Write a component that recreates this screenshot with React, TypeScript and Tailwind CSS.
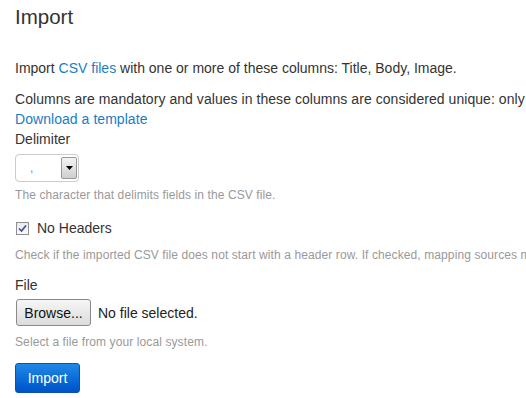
import { useState } from 'react';

function HelpText({ children, className = '' }: { children: React.ReactNode; className?: string }) {
  return <div className={`text-[12px] leading-[16px] tracking-[0.1px] text-[#999] ${className}`}>{children}</div>;
}

export default function App() {
  const [noHeaders, setNoHeaders] = useState(true);

  return (
    <div className="h-[398px] w-[526px] overflow-hidden bg-white px-[15px] font-['Liberation_Sans',Arial,sans-serif] text-[14px] leading-[20px] text-[#333] whitespace-nowrap">
      <h1 className="mt-[5px] text-[20.5px] leading-[24px] text-[#333]">Import</h1>

      <p className="mt-[29px]">
        Import <a href="#" className="text-[#1a7dc4]">CSV files</a> with one or more of these columns: Title, Body, Image.
      </p>

      <p className="mt-[11px] tracking-[0.05px]">
        Columns are mandatory and values in these columns are considered unique: only one entry per Title value will be
        created.
        <br />
        <a href="#" className="text-[#1a7dc4]">Download a template</a>
      </p>

      <label className="block">Delimiter</label>
      <div className="mt-[5px] flex h-[28px] w-[64px] items-stretch overflow-hidden rounded-[4px] border border-[#ccc]">
        <span className="flex-1 pl-[14px] text-[12px] leading-[26px] text-[#7a8aa8]">,</span>
        <span className="my-[2px] mr-[1px] flex w-[16px] items-center justify-center rounded-[2px] border border-[#999] bg-gradient-to-b from-[#f4f4f4] to-[#cfcfcf]">
          <svg width="7" height="4" viewBox="0 0 7 4">
            <path d="M0 0h7L3.5 4z" fill="#000" />
          </svg>
        </span>
      </div>
      <HelpText className="mt-[5px]">The character that delimits fields in the CSV file.</HelpText>

      <label className="mt-[15px] flex items-center gap-[8px]">
        <input
          type="checkbox"
          checked={noHeaders}
          onChange={(event) => setNoHeaders(event.target.checked)}
          className="sr-only"
        />
        <span className="ml-[1px] flex h-[13px] w-[13px] items-center justify-center border border-[#8f8f8f] bg-gradient-to-b from-[#e8e8ee] to-[#fafafa]">
          {noHeaders ? (
            <svg width="9" height="9" viewBox="0 0 9 9">
              <path d="M1 4.5l2.5 2.5L8 1.5" fill="none" stroke="#3a4f8f" strokeWidth="1.6" />
            </svg>
          ) : null}
        </span>
        No Headers
      </label>
      <HelpText className="mt-[9px]">
        Check if the imported CSV file does not start with a header row. If checked, mapping sources must be column
        numbers.
      </HelpText>

      <label className="mt-[12px] block">File</label>
      <div className="mt-[4px] flex items-center gap-[7px] pl-[1px]">
        <button
          type="button"
          className="h-[27px] w-[75px] rounded-[3px] border border-[#8a8a8a] bg-gradient-to-b from-[#f6f6f6] to-[#dcdcdc] text-[14px] text-[#111]"
        >
          Browse...
        </button>
        <span className="text-[#222]">No file selected.</span>
      </div>
      <HelpText className="mt-[8px]">Select a file from your local system.</HelpText>

      <button
        type="button"
        className="mt-[13px] h-[30px] w-[65px] rounded-[3px] border border-[#0a4fb5] bg-gradient-to-b from-[#2088e6] to-[#0052c9] text-[14px] text-white"
      >
        Import
      </button>
    </div>
  );
}
